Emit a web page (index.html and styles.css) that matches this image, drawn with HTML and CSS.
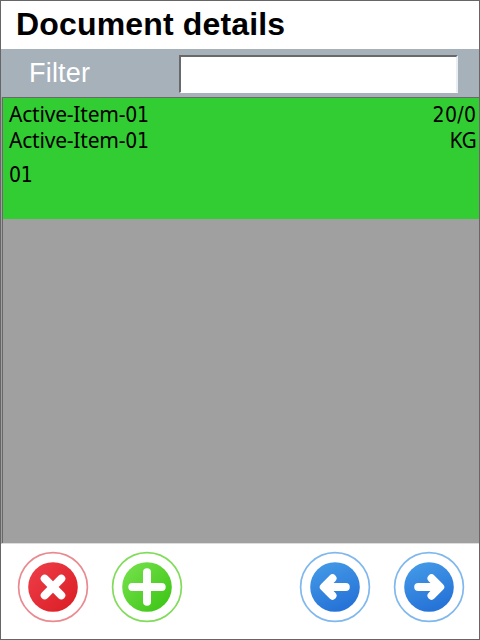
FILE: index.html
```html
<!DOCTYPE html>
<html lang="en">
<head>
<meta charset="utf-8">
<title>Document details</title>
<link rel="stylesheet" href="styles.css">
</head>
<body>
<main class="screen">
  <header class="title"><h1>Document details</h1></header>
  <div class="filter">
    <label for="filter">Filter</label>
    <input id="filter" type="text">
  </div>
  <section class="list">
    <article class="item">
      <div class="row"><span class="name">Active-Item-<span class="num">01</span></span><span class="num qty">20/0</span></div>
      <div class="row"><span class="name">Active-Item-<span class="num">01</span></span><span class="unit">KG</span></div>
      <div class="row last"><span class="num">01</span></div>
    </article>
  </section>
  <footer class="actions">
    <button class="action" aria-label="Cancel">
      <svg viewBox="0 0 72 72">
        <defs><linearGradient id="red" x1="0" y1="0" x2="1" y2="1"><stop offset=".1" stop-color="#ec3c46"/><stop offset=".9" stop-color="#dc1f27"/></linearGradient></defs>
        <circle class="ring red" cx="36" cy="36" r="34.4"/>
        <circle cx="36" cy="36" r="24.8" fill="url(#red)"/>
        <path class="glyph" d="M27.7 27.7L44.3 44.3M44.3 27.7L27.7 44.3"/>
      </svg>
    </button>
    <button class="action" aria-label="Add">
      <svg viewBox="0 0 72 72">
        <defs><linearGradient id="green" x1="0" y1="0" x2="1" y2="1"><stop offset=".1" stop-color="#73e04a"/><stop offset=".9" stop-color="#3fc617"/></linearGradient></defs>
        <circle class="ring green" cx="36" cy="36" r="34.4"/>
        <circle cx="36" cy="36" r="24.8" fill="url(#green)"/>
        <path class="glyph" d="M36 21.3V50.7M21.3 36H50.7"/>
      </svg>
    </button>
    <button class="action back" aria-label="Previous">
      <svg viewBox="0 0 72 72">
        <defs><linearGradient id="blue" x1="0" y1="0" x2=".4" y2="1"><stop offset="0" stop-color="#469de8"/><stop offset="1" stop-color="#2774d8"/></linearGradient></defs>
        <circle class="ring blue" cx="36" cy="36" r="34.4"/>
        <circle cx="36" cy="36" r="24.8" fill="url(#blue)"/>
        <path class="glyph" d="M46.8 36H26M33.5 27.3L24.8 36L33.5 44.7"/>
        <path class="fill" d="M34 27.3L24 36L34 44.7Z"/>
      </svg>
    </button>
    <button class="action" aria-label="Next">
      <svg viewBox="0 0 72 72">
        <circle class="ring blue" cx="36" cy="36" r="34.4"/>
        <circle cx="36" cy="36" r="24.8" fill="url(#blue)"/>
        <path class="glyph" d="M25.2 36H46M38.5 27.3L47.2 36L38.5 44.7"/>
        <path class="fill" d="M38 27.3L48 36L38 44.7Z"/>
      </svg>
    </button>
  </footer>
</main>
</body>
</html>
```
FILE: styles.css
```css
* { box-sizing: border-box; }
body { margin: 0; }
.screen {
  width: 480px;
  height: 640px;
  border: 1px solid #666;
  background: #fff;
  display: flex;
  flex-direction: column;
  font-family: "Liberation Sans", Arial, sans-serif;
}
.title { height: 48px; padding-left: 15px; }
h1 { margin: 0; font-size: 32px; line-height: 46px; font-weight: bold; letter-spacing: .16px; color: #000; white-space: nowrap; }
.filter {
  height: 48px;
  background: #a6b1ba;
  display: flex;
  align-items: flex-start;
  padding: 6px 21px 0 28px;
}
.filter label { width: 150px; font-size: 27px; line-height: 36px; letter-spacing: .2px; color: #fff; }
.filter input {
  width: 279px;
  height: 38px;
  border: 1px solid #fff;
  border-top: 2px solid #696969;
  border-left: 2px solid #696969;
  border-right: 2px solid #e8eef2;
  border-radius: 0;
  background: #fff;
  outline: none;
  font-size: 24px;
}
.list {
  height: 447px;
  border-left: 1px solid #a0a0a0;
  box-shadow: inset 1px 1px #696969;
  border-bottom: 1px solid #ddd;
  padding: 1px 0 0 1px;
  background: #a0a0a0;
}
.item {
  height: 121px;
  padding: 4px 3px 0 6px;
  background: #32cd32;
  color: #000;
  font-family: "Noto Sans", sans-serif;
  font-size: 21px;
}
.row { height: 26px; line-height: 24px; display: flex; justify-content: space-between; }
.row.last { margin-top: 8px; }
.name { letter-spacing: -.2px; }
.num { font-family: "DejaVu Sans Condensed", "DejaVu Sans", sans-serif; font-stretch: condensed; font-size: 21px; line-height: 20px; letter-spacing: -.3px; }
.row > .num { line-height: 26px; }
.qty { letter-spacing: .35px; margin-right: -.35px; }
.unit { letter-spacing: -.7px; }
.actions { flex: 1; display: flex; gap: 22px; padding: 7px 14px 0 16px; }
.action { width: 72px; height: 72px; padding: 0; border: 0; background: none; }
.action svg { display: block; width: 72px; height: 72px; }
.back { margin-left: auto; }
.ring { fill: #fff; stroke-width: 1.7; }
.red { stroke: #ea8a90; }
.green { stroke: #82dc5b; }
.blue { stroke: #80b8ee; }
.glyph { fill: none; stroke: #fff; stroke-width: 8; stroke-linecap: round; stroke-linejoin: round; }
.fill { fill: #fff; }
```
